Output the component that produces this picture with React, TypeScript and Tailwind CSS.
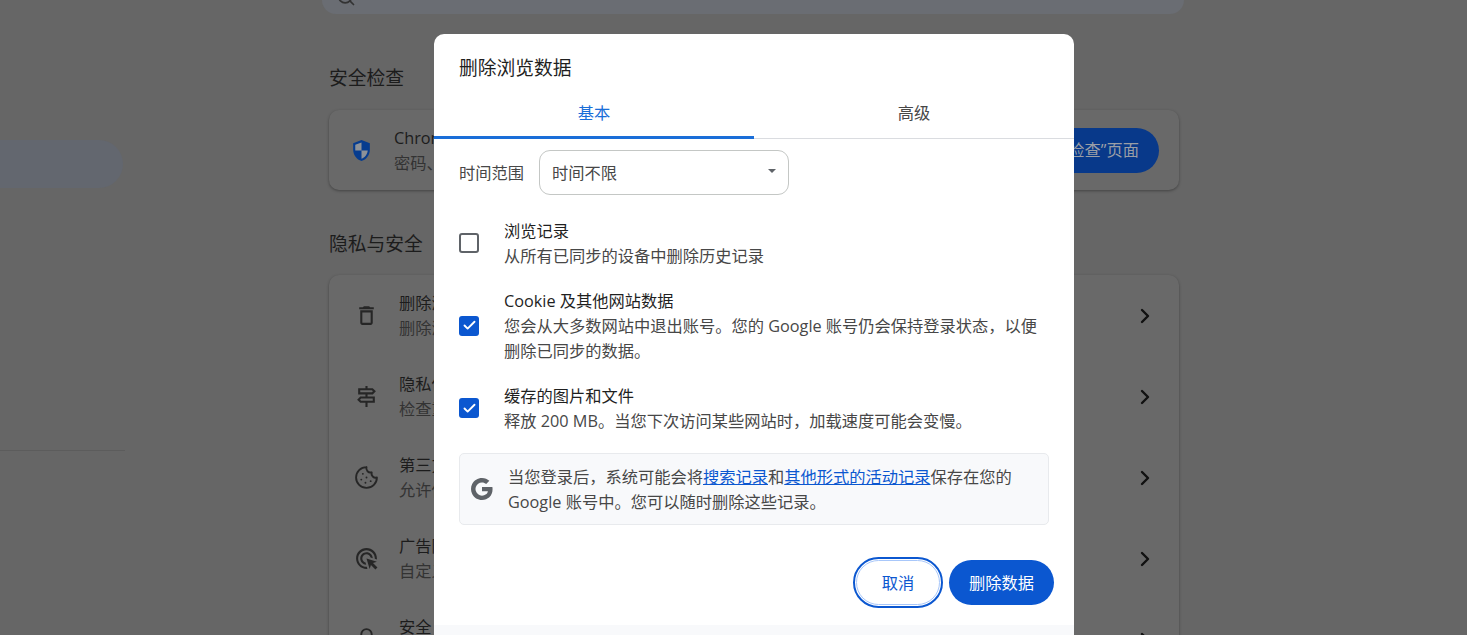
import React from 'react';
import { Check, ChevronRight, Cookie, Lock, Search } from 'lucide-react';

const font = "font-['Open_Sans','Noto_Sans_CJK_SC',sans-serif]";

const TrashIcon = () => (
  <svg viewBox="0 0 24 24" className="w-[25px] h-[25px] fill-[#262626]">
    <path d="M16 9v10H8V9h8m-1.5-6h-5l-1 1H5v2h14V4h-3.5l-1-1zM18 7H6v12c0 1.1.9 2 2 2h8c1.1 0 2-.9 2-2V7z" />
  </svg>
);

const SignpostIcon = () => (
  <svg viewBox="0 0 24 24" className="w-[25px] h-[25px] fill-[#262626]">
    <path d="M13 10h5l3-3-3-3h-5V2h-2v2H4v6h7v2H6l-3 3 3 3h5v4h2v-4h7v-6h-7v-2zM6 6h11.17l1 1-1 1H6V6zm12 10H6.83l-1-1 1-1H18v2z" />
  </svg>
);

const AdsIcon = () => (
  <svg viewBox="0 0 24 24" className="w-[25px] h-[25px] fill-[#262626]">
    <path d="M11.71 17.99C8.53 17.84 6 15.22 6 12c0-3.31 2.69-6 6-6 3.22 0 5.84 2.53 5.99 5.71l-2.1-.63C15.48 9.31 13.89 8 12 8c-2.21 0-4 1.79-4 4 0 1.89 1.31 3.48 3.08 3.89l.63 2.1zM22 12c0 .3-.01.6-.04.9l-1.97-.59c.01-.1.01-.21.01-.31 0-4.42-3.58-8-8-8s-8 3.58-8 8 3.58 8 8 8c.1 0 .21 0 .31-.01l.59 1.97c-.3.03-.6.04-.9.04-5.52 0-10-4.48-10-10S6.48 2 12 2s10 4.48 10 10zm-3.77 4.26L22 15l-10-3 3 10 1.26-3.77 4.27 4.27 1.98-1.98-4.28-4.26z" />
  </svg>
);

const ShieldIcon = () => (
  <svg viewBox="0 0 24 24" className="w-[25px] h-[25px]">
    <path d="M12 2 4 5v6c0 5.2 3.4 9.8 8 11 4.6-1.2 8-5.8 8-11V5l-8-3z" fill="#063c8f" />
    <path d="M12 4.2 6 6.4V12h6V4.2zM12 12v7.9c3.2-1.1 5.6-4.2 6-7.9h-6z" fill="#8d9298" />
  </svg>
);

const GoogleG = () => (
  <svg viewBox="0 0 24 24" className="w-[24px] h-[24px] fill-[#5f6368] shrink-0">
    <path d="M22.56 12.25c0-.78-.07-1.53-.2-2.25H12v4.26h5.92c-.26 1.37-1.04 2.53-2.21 3.31v2.77h3.57c2.08-1.92 3.28-4.74 3.28-8.09z" />
    <path d="M12 23c2.97 0 5.46-.98 7.28-2.66l-3.57-2.77c-.98.66-2.23 1.06-3.71 1.06-2.86 0-5.29-1.93-6.15-4.53H2.18v2.84C3.99 20.53 7.7 23 12 23z" />
    <path d="M5.85 14.09c-.22-.66-.35-1.36-.35-2.09s.13-1.43.35-2.09V7.07H2.18C1.43 8.55 1 10.22 1 12s.43 3.45 1.18 4.93l2.85-2.22.82-.62z" />
    <path d="M12 5.38c1.62 0 3.06.56 4.21 1.64l3.15-3.15C17.45 2.09 14.97 1 12 1 7.7 1 3.99 3.47 2.18 7.07l3.67 2.84c.86-2.6 3.29-4.53 6.15-4.53z" />
  </svg>
);

const privacyRows = [
  { icon: <TrashIcon />, title: '删除浏览数据', desc: '删除浏览记录' },
  { icon: <SignpostIcon />, title: '隐私保护指南', desc: '检查重要设置' },
  { icon: <Cookie className="w-[25px] h-[25px] text-[#262626]" strokeWidth={1.8} />, title: '第三方 Cookie', desc: '允许使用' },
  { icon: <AdsIcon />, title: '广告隐私设置', desc: '自定义广告' },
  { icon: <Lock className="w-[25px] h-[25px] text-[#262626]" strokeWidth={1.8} />, title: '安全', desc: '\u00a0' },
];

const BackgroundPage = () => (
  <div className="flex h-full">
    <div className="w-[322px] shrink-0">
      <div className="mt-[140px] w-[123px] h-[48px] rounded-r-full bg-[#63676f]" />
      <div className="mt-[262px] w-[125px] h-px bg-[#5c5c5c]" />
    </div>
    <div className="w-[862px] shrink-0">
      <div className="h-[14px] rounded-b-[14px] bg-[#6a6d73] pl-[14px] flex items-start">
        <Search className="w-[20px] h-[20px] text-[#333] -mt-[13px]" />
      </div>
      <div className="pl-[7px] pr-[5px]">
        <h2 className="mt-[50px] h-[28px] leading-[28px] text-[18.75px] text-[#1c1c1c]">安全检查</h2>
        <div className="mt-[18px] h-[80px] rounded-[10px] bg-[#696969] shadow-[0_1px_3px_rgba(0,0,0,0.35)] flex items-center pl-[20px] pr-[20px]">
          <ShieldIcon />
          <div className="ml-[20px] flex-1 pt-[2px] leading-[25px]">
            <div className="text-[16.25px] text-[#1c1c1c]">Chrome 会定期检查</div>
            <div className="text-[16.25px] text-[#333]">密码、扩展程序</div>
          </div>
          <div className="h-[45px] w-[200px] rounded-full bg-[#08398a] text-[16.25px] text-[#9a9ea6] flex items-center justify-end pr-[20px]">
            前往“安全检查”页面
          </div>
        </div>
        <h2 className="mt-[40px] h-[28px] leading-[28px] text-[18.75px] text-[#1c1c1c]">隐私与安全</h2>
        <div className="mt-[17px] rounded-[10px] bg-[#696969] shadow-[0_1px_3px_rgba(0,0,0,0.35)]">
          {privacyRows.map((row) => (
            <div key={row.title} className="h-[81px] flex items-center pl-[25px] pr-[22px]">
              {row.icon}
              <div className="ml-[20px] flex-1 leading-[25px]">
                <div className="text-[16.25px] text-[#1c1c1c]">{row.title}</div>
                <div className="text-[16.25px] text-[#333]">{row.desc}</div>
              </div>
              <ChevronRight className="w-[24px] h-[24px] text-[#111]" strokeWidth={2.4} />
            </div>
          ))}
        </div>
      </div>
    </div>
  </div>
);

const ClearOption = ({ checked, title, children }: { checked: boolean; title: string; children: React.ReactNode }) => (
  <div className="flex items-center">
    {checked ? (
      <div className="-mt-[2px] w-[20px] h-[20px] rounded-[3px] bg-[#0b57d0] flex items-center justify-center shrink-0">
        <Check className="w-[15px] h-[15px] text-white" strokeWidth={3} />
      </div>
    ) : (
      <div className="-mt-[2px] w-[20px] h-[20px] rounded-[3px] border-2 border-[#5f6368] shrink-0" />
    )}
    <div className="ml-[25px] leading-[25px]">
      <div className="text-[16.25px] text-[#1f1f1f]">{title}</div>
      <div className="text-[16.25px] text-[#474747]">{children}</div>
    </div>
  </div>
);

export default function App() {
  return (
    <div className={`relative w-[1467px] h-[635px] overflow-hidden bg-[#666666] ${font}`}>
      <BackgroundPage />

      {/* dialog */}
      <div className="absolute left-[434px] top-[34px] w-[640px] h-[640px] bg-white rounded-t-[10px]">
        <h1 className="pt-[20px] pl-[25px] h-[56px] leading-[28px] text-[18.75px] text-[#1f1f1f]">删除浏览数据</h1>

        <div className="flex h-[49px] pb-[1px] border-b border-[#dadce0] text-[16.25px]">
          <div className="relative flex-1 flex items-center justify-center text-[#1a6ed8]">
            基本
            <div className="absolute left-0 right-0 -bottom-[2px] h-[3px] bg-[#1a6ed8]" />
          </div>
          <div className="flex-1 flex items-center justify-center text-[#474747]">高级</div>
        </div>

        <div className="mt-[11px] pl-[25px] flex items-center">
          <span className="pt-[2px] text-[16.25px] text-[#474747]">时间范围</span>
          <div className="ml-[15px] w-[250px] h-[45px] rounded-[11px] border border-[#c4c7c5] flex items-center justify-between pl-[12px] pr-[12px]">
            <span className="pt-[2px] text-[16.25px] text-[#474747]">时间不限</span>
            <div className="w-0 h-0 border-x-[4.5px] border-x-transparent border-t-[4.5px] border-t-[#5f6368] -mt-[3px]" />
          </div>
        </div>

        <div className="mt-[24px] pl-[25px] pr-[30px] flex flex-col gap-[20px]">
          <ClearOption checked={false} title="浏览记录">从所有已同步的设备中删除历史记录</ClearOption>
          <ClearOption checked title="Cookie 及其他网站数据">
            您会从大多数网站中退出账号。您的 Google 账号仍会保持登录状态，以便删除已同步的数据。
          </ClearOption>
          <ClearOption checked title="缓存的图片和文件">释放 200 MB。当您下次访问某些网站时，加载速度可能会变慢。</ClearOption>
        </div>

        <div className="mt-[19px] ml-[25px] w-[590px] h-[72px] rounded-[5px] border border-[#e8eaed] bg-[#f8f9fb] flex items-center pl-[10px] pr-[30px]">
          <GoogleG />
          <p className="ml-[14px] pt-[2px] text-[16.25px] leading-[25px] text-[#474747]">
            当您登录后，系统可能会将<span className="text-[#0b57d0] underline">搜索记录</span>和<span className="text-[#0b57d0] underline">其他形式的活动记录</span>保存在您的 Google 账号中。您可以随时删除这些记录。
          </p>
        </div>

        <div className="mt-[35px] pr-[20px] flex justify-end gap-[9px]">
          <button className="w-[84px] h-[45px] pt-[2px] rounded-full bg-white border border-[#a8c7fa] text-[16.25px] text-[#0b57d0] outline-2 outline-offset-1 outline-[#0b57d0]">
            取消
          </button>
          <button className="w-[105px] h-[45px] pt-[2px] rounded-full bg-[#0b57d0] text-[16.25px] text-white">删除数据</button>
        </div>

        <div className="mt-[20px] h-[40px] bg-[#f8f9fb]" />
      </div>
    </div>
  );
}
